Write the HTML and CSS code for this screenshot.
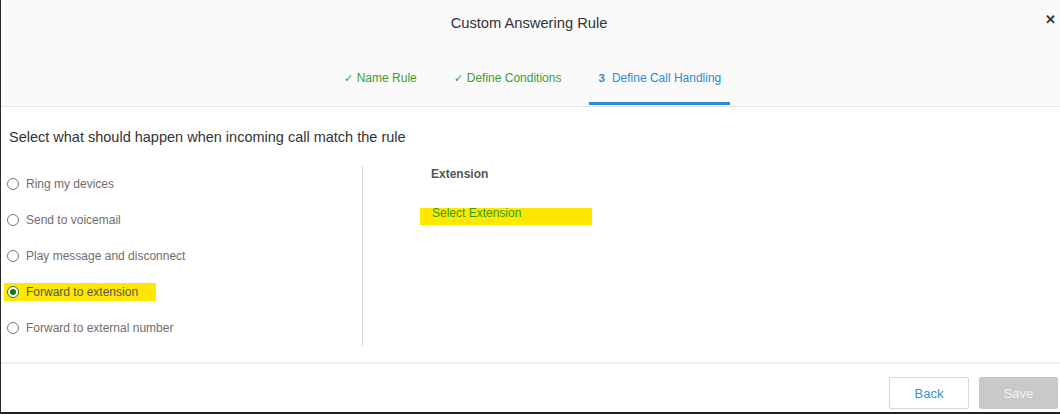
FILE: index.html
```html
<!DOCTYPE html>
<html>
<head>
<meta charset="utf-8">
<link rel="stylesheet" href="styles.css">
</head>
<body>
<div class="dialog">
  <header class="header">
    <div class="title">Custom Answering Rule</div>
    <span class="close">✕</span>
    <nav class="tabs">
      <div class="tab done"><span class="check">✓</span>Name Rule</div>
      <div class="tab done"><span class="check">✓</span>Define Conditions</div>
      <div class="tab active"><span class="num">3</span>Define Call Handling</div>
    </nav>
  </header>
  <main class="content">
    <h2 class="heading">Select what should happen when incoming call match the rule</h2>
    <div class="columns">
      <div class="options">
        <div class="option"><span class="opt-inner"><span class="radio"></span>Ring my devices</span></div>
        <div class="option"><span class="opt-inner"><span class="radio"></span>Send to voicemail</span></div>
        <div class="option"><span class="opt-inner"><span class="radio"></span>Play message and disconnect</span></div>
        <div class="option"><span class="opt-inner hl"><span class="radio checked"></span>Forward to extension</span></div>
        <div class="option"><span class="opt-inner"><span class="radio"></span>Forward to external number</span></div>
      </div>
      <div class="details">
        <div class="label">Extension</div>
        <div class="select-ext">Select Extension</div>
      </div>
    </div>
  </main>
  <footer class="footer">
    <button class="btn back">Back</button>
    <button class="btn save">Save</button>
  </footer>
</div>
</body>
</html>
```

FILE: styles.css
```css
* { box-sizing: border-box; }
html, body { margin: 0; padding: 0; background: #fff; }
body { font-family: "Liberation Sans", Arial, sans-serif; }

.dialog {
  width: 1060px;
  height: 414px;
  border-left: 1px solid #2a2a2a;
  border-bottom: 2px solid #222;
  display: flex;
  flex-direction: column;
  position: relative;
  background: #fff;
}

.header {
  height: 107px;
  background: #fafafa;
  border-bottom: 1px solid #e4e4e4;
  padding-top: 14px;
}
.title {
  text-align: center;
  font-size: 14.7px;
  line-height: 18px;
  color: #333;
  padding-right: 3px;
}
.close {
  position: absolute;
  right: 4px;
  top: 12px;
  font-size: 13px;
  font-weight: bold;
  color: #333;
}
.tabs {
  display: flex;
  justify-content: center;
  gap: 19px;
  margin-top: 37px;
  padding-left: 4px;
}
.tab {
  font-size: 12px;
  line-height: 18px;
  padding: 0 9px 15px;
  border-bottom: 3px solid transparent;
  display: flex;
  align-items: center;
}
.tab.done { color: #3d9a35; }
.tab.active { color: #2a8bd0; border-bottom-color: #2a8bd0; }
.check { font-size: 11px; margin-right: 4px; }
.num { font-weight: bold; font-size: 11.5px; margin-right: 7px; }

.content { flex: 1; }
.heading {
  margin: 20px 0 0 8px;
  font-size: 14.5px;
  line-height: 20px;
  font-weight: normal;
  color: #333;
}
.columns {
  display: flex;
  margin-top: 19px;
}
.options {
  width: 362px;
  height: 180px;
  border-right: 1px solid #dcdcdc;
}
.option {
  height: 36px;
  display: flex;
  align-items: center;
  padding-left: 3px;
}
.opt-inner {
  display: inline-flex;
  align-items: center;
  height: 18px;
  padding: 0 18px 0 3px;
  font-size: 12px;
  color: #6e6e6e;
}
.opt-inner.hl { background: #ffe800; color: #555; }
.radio {
  width: 12px;
  height: 12px;
  border: 1px solid #777;
  border-radius: 50%;
  margin-right: 7px;
  background: #fff;
  position: relative;
  flex: none;
}
.radio.checked { border-color: #2e7d2e; }
.radio.checked::after {
  content: "";
  position: absolute;
  left: 2px; top: 2px;
  width: 6px; height: 6px;
  border-radius: 50%;
  background: #1f6e1f;
}

.details {
  padding-left: 57px;
  padding-top: 1px;
}
.label {
  font-size: 12px;
  font-weight: bold;
  color: #555;
  line-height: 14px;
  padding-left: 11px;
}
.select-ext {
  margin-top: 27px;
  width: 172px;
  height: 17px;
  background: #ffe800;
  color: #2f9a1f;
  font-size: 12px;
  line-height: 10px;
  padding-left: 12px;
}

.footer {
  height: 50px;
  border-top: 2px solid #f0f0f0;
  display: flex;
  justify-content: flex-end;
  align-items: flex-start;
  gap: 10px;
  padding: 13px 2px 0 0;
}
.btn {
  height: 32px;
  width: 80px;
  font-family: "Liberation Sans", Arial, sans-serif;
  font-size: 13px;
  border-radius: 2px;
  cursor: pointer;
}
.btn.back {
  background: #fff;
  border: 1px solid #d8d8d8;
  color: #3a8fd0;
}
.btn.save {
  background: #c9c9c9;
  border: 1px solid #c9c9c9;
  color: #f2f2f2;
  width: 79px;
}
```
